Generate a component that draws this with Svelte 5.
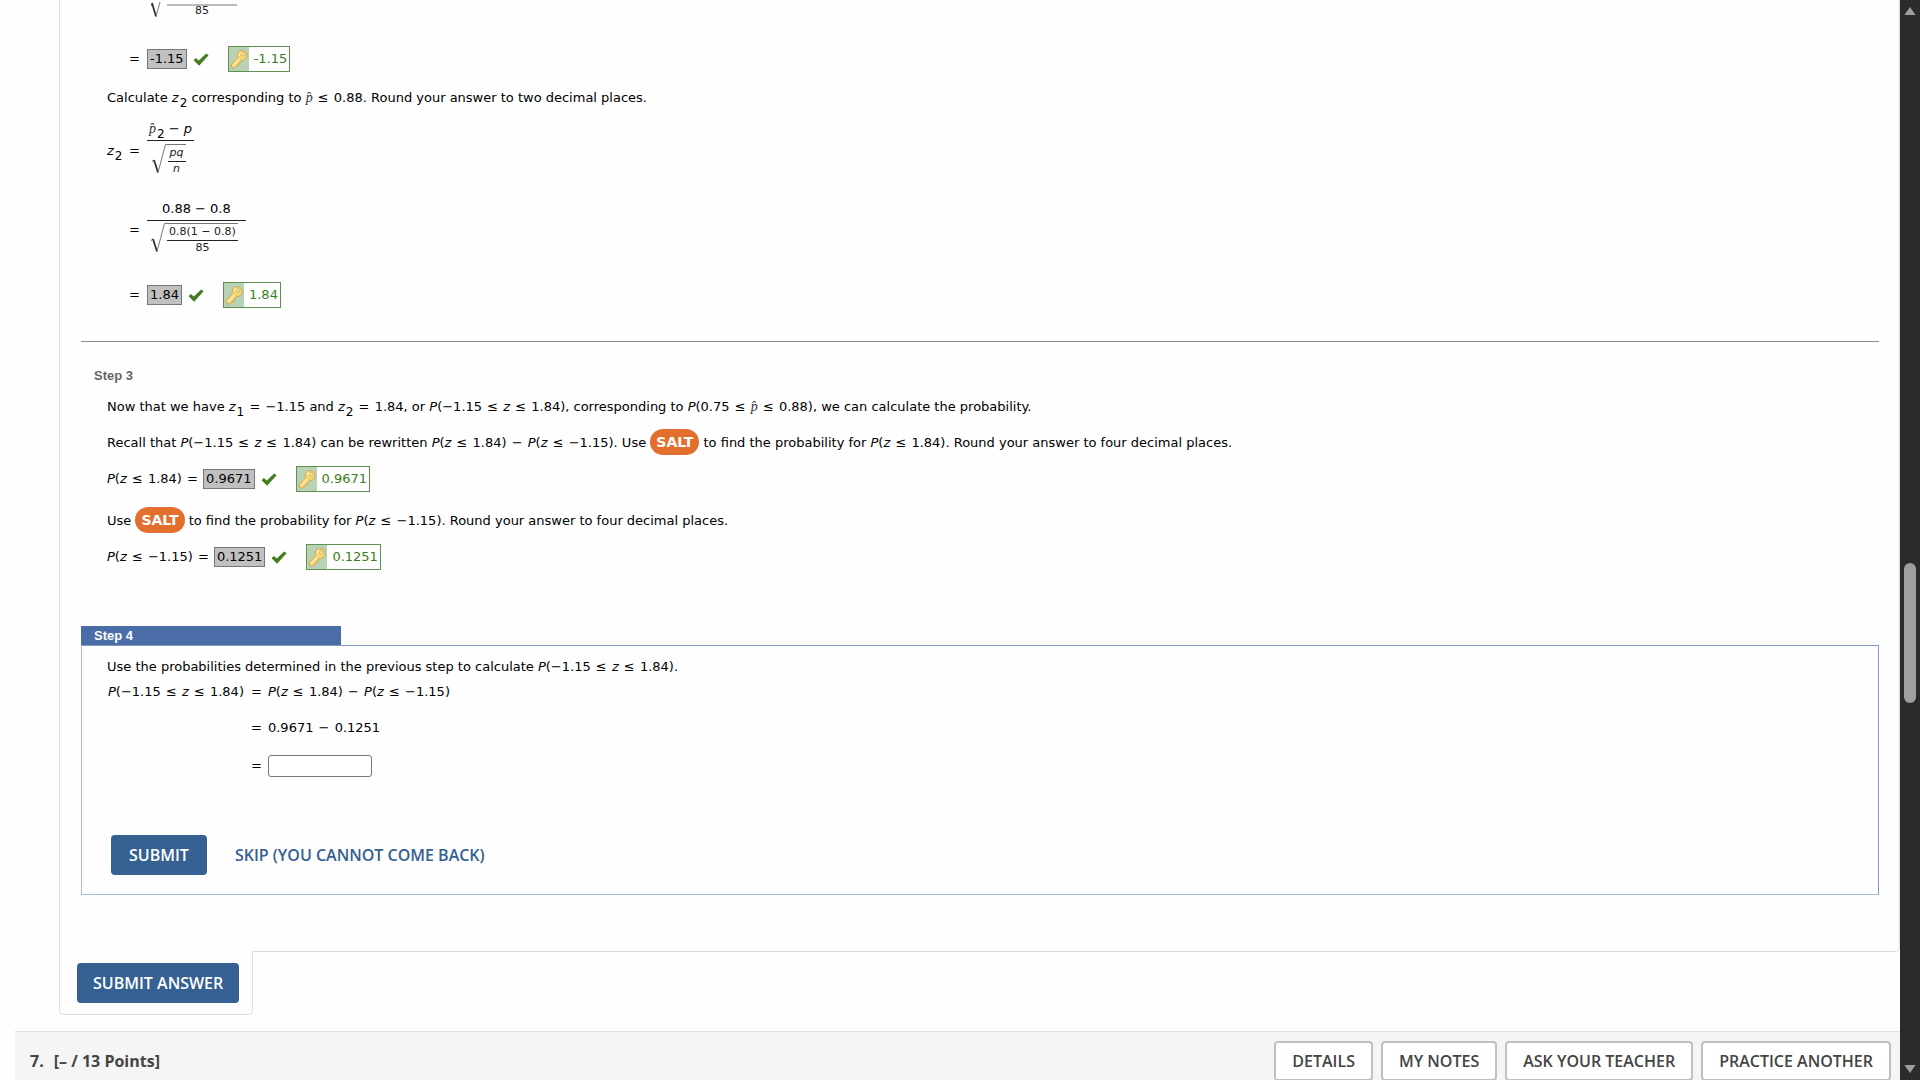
<script>
  let answer = $state('');
  const actions = ['Details', 'My Notes', 'Ask Your Teacher', 'Practice Another'];
</script>

{#snippet phat()}<span class="phat">p̂</span>{/snippet}
{#snippet op(sign)}<span class="op">{sign}</span>{/snippet}

{#snippet graded(value)}
  <span class="given">{value}</span>
  <svg class="check" viewBox="0 0 16 13" aria-label="Correct"><path d="M.6 7.2 2.800 4.900 5.800 7.600 13.200 .5 15.600 2.300 6.100 12.700z" /></svg>
  <span class="keybox">
    <span class="keycell">
      <svg viewBox="0 0 18 20" aria-hidden="true">
        <path d="M7.400 8.600C6.400 4.800 8.600 1.500 12 1.600c3.800.2 5.800 3.600 4.600 6.700-1 2.500-3.200 3.700-5.600 3.400L9.800 13l.2 1.800-1.900.4-.2 1.800-1.700.3L4.600 19H1.700L1 15.800z" fill="#f2d672" stroke="#cfa75a" />
        <circle cx="13" cy="5.200" r="1.500" fill="#fbf3cf" stroke="#c9a64e" stroke-width=".7" />
        <path d="M3 16.800 9 10.400M9.400 6.600C9.200 4.800 10.200 3.600 11.400 3.400" stroke="#fcf0b8" stroke-width="1.200" fill="none" />
      </svg>
    </span>
    <span class="keyval">{value}</span>
  </span>
{/snippet}

{#snippet root()}
  <svg class="radical" viewBox="0 0 14 30" aria-hidden="true">
    <path d="M0 17.500 2 16" stroke="#555" />
    <path d="M2 16 6 28.500" stroke="#333" stroke-width="1.800" />
    <path d="M6 28.500 13.500 .5H14" stroke="#777" />
  </svg>
{/snippet}

<div class="page">
  <main>
    <section class="panel">
      <div class="work">
        <div class="math first">
          <svg viewBox="0 0 88 16" aria-hidden="true">
            <path d="M0 4 1 2" stroke="#555" />
            <path d="M1 1 5 14.500" stroke="#333" stroke-width="1.800" />
            <path d="M5 14.500 9 0" stroke="#777" />
            <path d="M16 3H86" stroke="#bbb" stroke-width="2" />
          </svg>
          <span class="small">85</span>
        </div>
        <div class="math result"><span class="lhs"></span><span class="eq">=</span>{@render graded('-1.15')}</div>

        <p>Calculate <i>z</i><sub>2</sub> corresponding to {@render phat()} {@render op('≤')} 0.88. Round your answer to two decimal places.</p>

        <div class="math def">
          <span class="lhs"><i>z</i><sub>2</sub></span><span class="eq">=</span>
          <div class="frac">
            <span class="num">{@render phat()}<sub>2</sub> − <i>p</i></span>
            <span class="den">
              <div class="sqrt">
                {@render root()}
                <div class="frac small bar"><span class="num"><i>pq</i></span><span class="den"><i>n</i></span></div>
              </div>
            </span>
          </div>
        </div>
        <div class="math sub2">
          <span class="lhs"></span><span class="eq">=</span>
          <div class="frac">
            <span class="num">0.88 − 0.8</span>
            <span class="den">
              <div class="sqrt">
                {@render root()}
                <div class="frac small bar"><span class="num">0.8(1 − 0.8)</span><span class="den">85</span></div>
              </div>
            </span>
          </div>
        </div>
        <div class="math result"><span class="lhs"></span><span class="eq">=</span>{@render graded('1.84')}</div>
      </div>

      <hr />

      <h2>Step 3</h2>
      <div class="work step3">
        <p>Now that we have <i>z</i><sub>1</sub> {@render op('=')} −1.15 and <i>z</i><sub>2</sub> {@render op('=')} 1.84, or <i>P</i>(−1.15 {@render op('≤')} <i>z</i> {@render op('≤')} 1.84), corresponding to <i>P</i>(0.75 {@render op('≤')} {@render phat()} {@render op('≤')} 0.88), we can calculate the probability.</p>
        <p>Recall that <i>P</i>(−1.15 {@render op('≤')} <i>z</i> {@render op('≤')} 1.84) can be rewritten <i>P</i>(<i>z</i> {@render op('≤')} 1.84) {@render op('−')} <i>P</i>(<i>z</i> {@render op('≤')} −1.15). Use <a class="salt" href="#salt">SALT</a> to find the probability for <i>P</i>(<i>z</i> {@render op('≤')} 1.84). Round your answer to four decimal places.</p>
        <div class="answer"><span><i>P</i>(<i>z</i> {@render op('≤')} 1.84) {@render op('=')}</span>{@render graded('0.9671')}</div>
        <p>Use <a class="salt" href="#salt">SALT</a> to find the probability for <i>P</i>(<i>z</i> {@render op('≤')} −1.15). Round your answer to four decimal places.</p>
        <div class="answer"><span><i>P</i>(<i>z</i> {@render op('≤')} −1.15) {@render op('=')}</span>{@render graded('0.1251')}</div>
      </div>

      <h2 class="tab">Step 4</h2>
      <form class="step4" onsubmit={(e) => e.preventDefault()}>
        <p>Use the probabilities determined in the previous step to calculate <i>P</i>(−1.15 {@render op('≤')} <i>z</i> {@render op('≤')} 1.84).</p>
        <div class="derive">
          <span><i>P</i>(−1.15 {@render op('≤')} <i>z</i> {@render op('≤')} 1.84)</span><span>=</span><span><i>P</i>(<i>z</i> {@render op('≤')} 1.84) {@render op('−')} <i>P</i>(<i>z</i> {@render op('≤')} −1.15)</span>
          <span></span><span>=</span><span>0.9671 {@render op('−')} 0.1251</span>
          <span></span><span>=</span><input type="text" aria-label="Answer" bind:value={answer} />
        </div>
        <div class="buttons">
          <button class="primary" type="submit">SUBMIT</button>
          <button class="skip" type="button">SKIP (YOU CANNOT COME BACK)</button>
        </div>
      </form>
    </section>

    <div class="final"><button class="primary" type="button">SUBMIT ANSWER</button></div>

    <header class="next">
      <h3><span>7.</span><span>[– / 13 Points]</span></h3>
      <nav>
        {#each actions as label}<button type="button">{label}</button>{/each}
      </nav>
    </header>
  </main>

  <div class="scroll" aria-hidden="true">
    <svg viewBox="0 0 12 10"><path d="M6 1.500 10.800 8.500H1.200z" /></svg>
    <div class="track"><div class="thumb"></div></div>
    <svg viewBox="0 0 12 10"><path d="M6 8.500 10.800 1.500H1.200z" /></svg>
  </div>
</div>

<style>
  :global(body) { margin: 0; background: #fefefe; overflow: hidden; }
  * { box-sizing: border-box; }
  .page {
    display: flex;
    height: 100vh;
    overflow: hidden;
    color: #000;
    font: 13px/20px Verdana, "DejaVu Sans", sans-serif;
  }
  main { flex: 1; min-width: 0; }
  .panel {
    margin-left: 59px;
    padding: 0 20px 56px 21px;
    border: solid #dcdcdc;
    border-width: 0 1px 1px;
    border-radius: 0 0 5px 0;
  }
  .work { padding-left: 26px; }
  p { margin: 0; }
  sub { font-size: 12px; line-height: 0; vertical-align: -5px; margin-left: 1px; }
  .op { margin: 0 1px; }
  .phat { font-family: "Liberation Serif", serif; font-style: italic; font-size: 14px; line-height: 0; color: #333; }

  .math { display: flex; align-items: center; }
  .lhs { width: 22px; }
  .eq { width: 18px; }
  .def > .lhs, .def > .eq, .sub2 > .lhs, .sub2 > .eq { padding-top: 6px; }
  .frac { display: inline-flex; flex-direction: column; align-items: center; }
  .frac > .num { padding: 0 2px; }
  .math > .frac > .num { padding-bottom: 1px; }
  .frac > .den { border-top: 1px solid #222; padding: 2px 8px 0 4px; display: flex; justify-content: center; align-self: stretch; }
  .def > .frac > .den { padding-top: 3px; }
  .sqrt { display: flex; }
  .radical { width: 14px; height: 30px; fill: none; }
  .small { font-size: 11px; line-height: 16px; color: #222; }
  .small.bar { border-top: 1px solid #777; padding-left: 2px; }
  .frac.small > .den { padding: 0; line-height: 14px; }
  .first { display: grid; grid-template-columns: 88px; margin-left: 44px; }
  .first > * { grid-area: 1 / 1; }
  .first svg { width: 88px; height: 16px; fill: none; }
  .first .small { padding: 3px 0 0 14px; text-align: center; }
  .result { height: 26px; margin-top: 27px; }
  .result + p { margin-top: 16px; }
  .def { margin-top: 11px; }
  .sub2 { margin-top: 23px; }

  .given { border: 1px solid #777; background: #c0c0c0; height: 20px; line-height: 18px; padding: 0 2px; }
  .check { width: 16px; height: 13px; margin: 0 19px 0 6px; fill: #437d1f; }
  .keybox { display: inline-flex; height: 26px; border: 1px solid #5d9150; color: #3a7d23; line-height: 24px; }
  .keycell { width: 20px; background: #b9d1b4; display: flex; align-items: center; justify-content: center; }
  .keycell svg { width: 18px; height: 20px; }
  .keyval { padding: 0 2px 0 5px; }

  hr { margin: 33px 0 0; border: 0; border-top: 1px solid #8b8f8b; }
  h2 { margin: 24px 0 0; padding-left: 13px; font: bold 13px/20px Arial, "Liberation Sans", sans-serif; color: #666; }
  .step3 { padding-top: 11px; }
  .step3 p + p { margin-top: 12px; line-height: 26px; }
  .step3 .answer + p { margin-top: 15px; line-height: 26px; }
  .answer { display: flex; align-items: center; margin-top: 10px; }
  .answer > span:first-child { margin-right: 4px; }
  .salt {
    display: inline-block;
    height: 26px;
    padding: 0 6px;
    border-radius: 13px;
    background: #e36f2e;
    color: #fff;
    font-size: 14px;
    font-weight: bold;
    line-height: 26px;
    text-decoration: none;
  }
  h2.tab { width: 260px; margin: 56px 0 0; line-height: 19px; background: #4a6da7; color: #fff; }
  .step4 { border: 1px solid #7f9bc3; border-left-color: #a9bdd9; border-bottom-color: #a9bdd9; padding: 11px 30px 19px 25px; }
  .derive { display: grid; grid-template-columns: max-content 10px auto; column-gap: 7px; margin-top: 5px; padding-left: 1px; align-items: center; }
  .derive > :nth-child(n + 4) { margin-top: 16px; }
  .derive > :nth-child(n + 7) { margin-top: 17px; }
  .derive input { width: 104px; height: 22px; border: 1px solid #777; border-radius: 3px; background: #fff; font: inherit; padding: 1px 4px; }
  .buttons { display: flex; align-items: center; margin: 58px 0 0 4px; }
  button { font: 600 16px/22px "Open Sans", sans-serif; cursor: pointer; }
  .primary { height: 40px; padding: 0 18px; border: 0; border-radius: 4px; background: #346092; color: #fff; }
  .skip { margin-left: 28px; padding: 0; border: 0; background: none; color: #346092; }

  .final {
    position: relative;
    display: table;
    margin: -1px 0 0 59px;
    padding: 12px 13px 11px 17px;
    background: #fefefe;
    border: solid #dcdcdc;
    border-width: 0 1px 1px;
    border-radius: 0 0 5px 5px;
  }
  .final .primary { padding: 0 16px; }

  .next {
    display: flex;
    justify-content: space-between;
    align-items: flex-start;
    margin: 16px 0 0 15px;
    padding: 9px 9px 0 15px;
    height: 60px;
    border-top: 1px solid #e0e0e0;
    background: #f5f5f5;
  }
  h3 { display: flex; gap: 10px; margin: 9px 0 0; font: bold 16px/22px "Open Sans", sans-serif; color: #444; }
  nav { display: flex; gap: 8px; }
  nav button { height: 40px; padding: 0 16px; border: 2px solid #c0c0c0; border-radius: 4px; background: #fff; color: #444; text-transform: uppercase; }

  .scroll { flex: 0 0 20px; display: flex; flex-direction: column; align-items: center; padding: 5px 0; background: #2b2b2b; }
  .scroll svg { width: 14px; height: 12px; fill: #9f9f9f; }
  .track { flex: 1; padding-top: 546px; }
  .thumb { width: 12px; height: 140px; border-radius: 6px; background: #9f9f9f; }
</style>
